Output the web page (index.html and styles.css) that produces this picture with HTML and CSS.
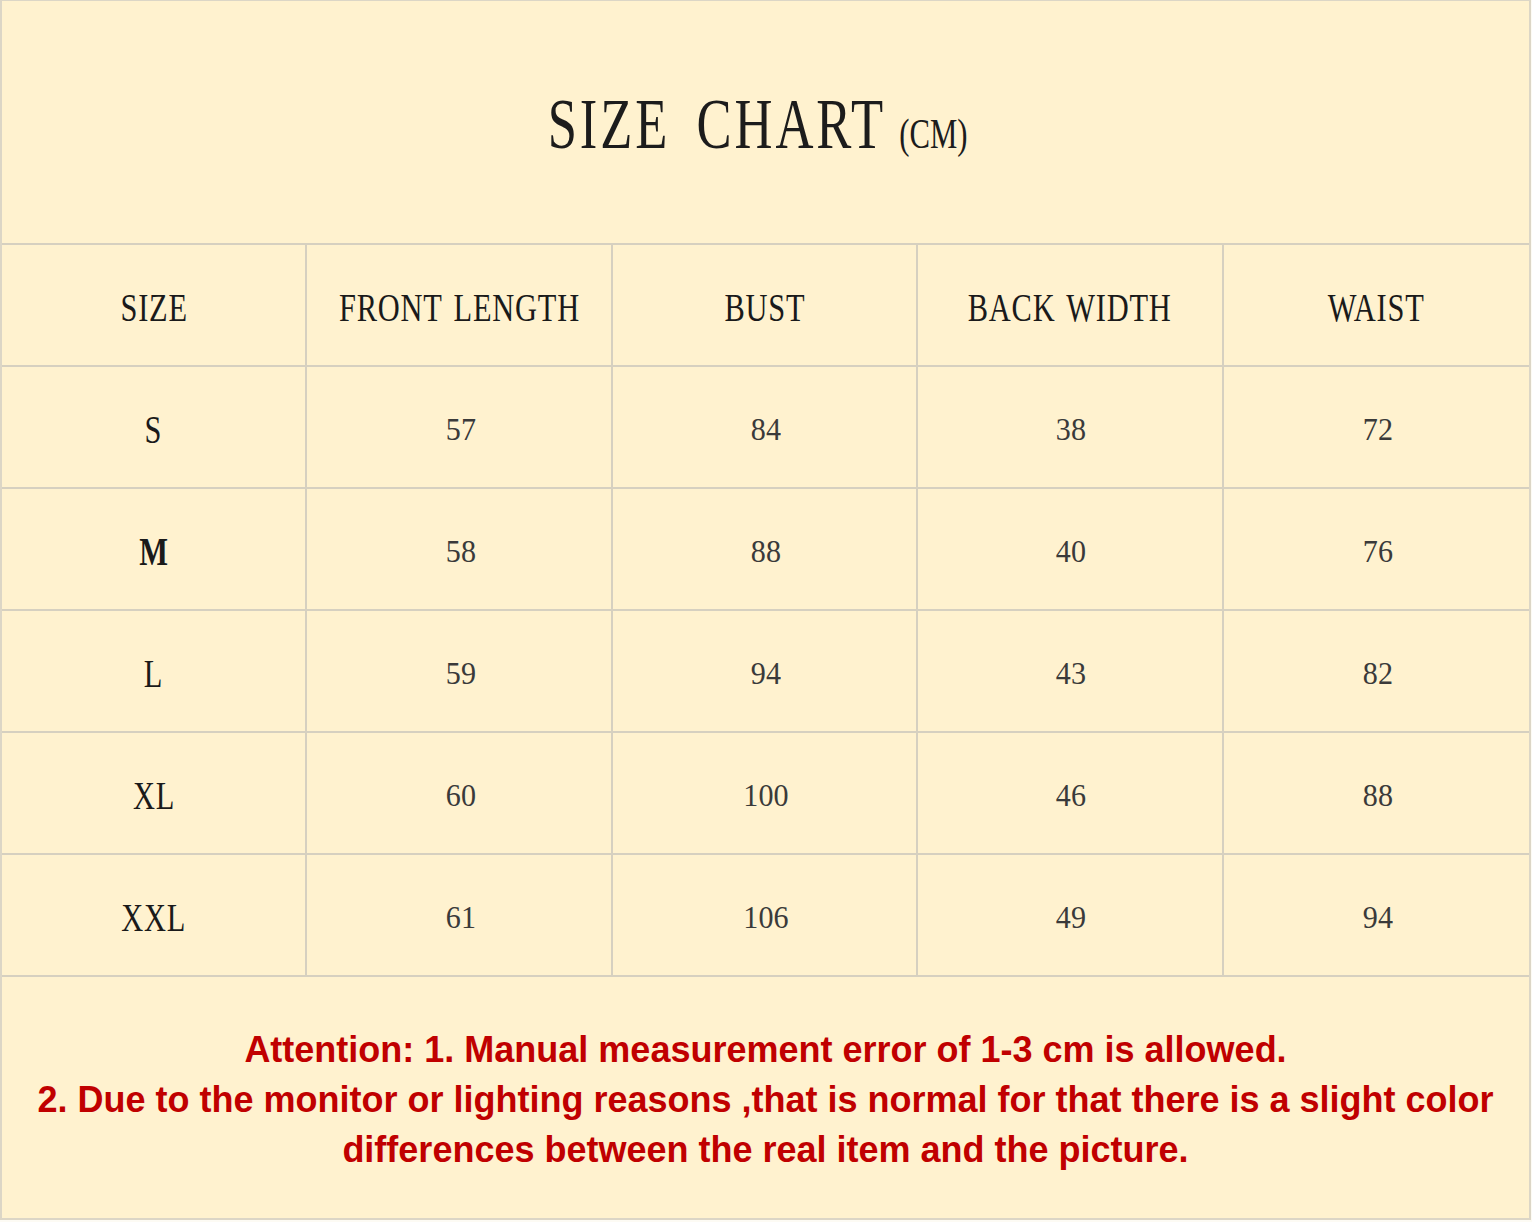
FILE: index.html
```html
<!DOCTYPE html>
<html lang="en">
<head>
<meta charset="utf-8">
<title>Size Chart</title>
<link rel="stylesheet" href="styles.css">
</head>
<body>
<div class="page">
  <header class="title">
    <h1 class="title-text"><span class="title-main">SIZE CHART</span><span class="title-unit">(CM)</span></h1>
  </header>
  <div class="chart">
    <div class="cell head"><span>SIZE</span></div>
    <div class="cell head"><span>FRONT LENGTH</span></div>
    <div class="cell head"><span>BUST</span></div>
    <div class="cell head"><span>BACK WIDTH</span></div>
    <div class="cell head"><span>WAIST</span></div>

    <div class="cell label"><span>S</span></div>
    <div class="cell num"><span>57</span></div>
    <div class="cell num"><span>84</span></div>
    <div class="cell num"><span>38</span></div>
    <div class="cell num"><span>72</span></div>

    <div class="cell label bold"><span>M</span></div>
    <div class="cell num"><span>58</span></div>
    <div class="cell num"><span>88</span></div>
    <div class="cell num"><span>40</span></div>
    <div class="cell num"><span>76</span></div>

    <div class="cell label"><span>L</span></div>
    <div class="cell num"><span>59</span></div>
    <div class="cell num"><span>94</span></div>
    <div class="cell num"><span>43</span></div>
    <div class="cell num"><span>82</span></div>

    <div class="cell label"><span>XL</span></div>
    <div class="cell num"><span>60</span></div>
    <div class="cell num"><span>100</span></div>
    <div class="cell num"><span>46</span></div>
    <div class="cell num"><span>88</span></div>

    <div class="cell label"><span>XXL</span></div>
    <div class="cell num"><span>61</span></div>
    <div class="cell num"><span>106</span></div>
    <div class="cell num"><span>49</span></div>
    <div class="cell num"><span>94</span></div>
  </div>
  <footer class="note">
    <p>Attention: 1. Manual measurement error of 1-3 cm is allowed.</p>
    <p>2. Due to the monitor or lighting reasons ,that is normal for that there is a slight color differences between the real item and the picture.</p>
  </footer>
</div>
</body>
</html>
```

FILE: styles.css
```css
* { box-sizing: border-box; }

html, body {
  margin: 0;
  padding: 0;
  background: #fdfbf4;
}

.page {
  width: 1531px;
  height: 1220px;
  background: #fff2cf;
  border: 1px solid #dcd6c6;
  border-width: 1px 2px 2px 2px;
  display: flex;
  flex-direction: column;
  font-family: "Liberation Serif", "Times New Roman", serif;
  color: #1c1c1c;
}

.title {
  height: 242px;
  display: flex;
  align-items: center;
  justify-content: center;
  padding-top: 4px;
}

.title-text {
  margin: 0 0 0 -16px;
  font-weight: normal;
  display: inline-block;
  transform: scaleX(0.73);
  white-space: nowrap;
}

.title-main {
  font-size: 72px;
  letter-spacing: 4px;
  word-spacing: 14px;
}

.title-unit {
  font-size: 42px;
  margin-left: 18px;
}

.chart {
  display: grid;
  grid-template-columns: repeat(5, minmax(0, 1fr));
  grid-auto-rows: 122px;
  border-bottom: 2px solid #d6d0c0;
}

.cell {
  display: flex;
  align-items: center;
  justify-content: center;
  border-top: 2px solid #d6d0c0;
  border-right: 2px solid #d6d0c0;
  padding-top: 5px;
  min-width: 0;
}

.cell:nth-child(5n) {
  border-right: none;
}

.cell span {
  display: inline-block;
  white-space: nowrap;
}

.head span,
.label span {
  font-size: 39px;
  transform: scaleX(0.78);
  color: #1a1a1a;
  letter-spacing: 1px;
  word-spacing: 4px;
}

.bold span {
  font-weight: bold;
}

.num span {
  font-size: 32px;
  color: #3a3a3a;
  transform: scaleX(0.94);
  padding-left: 3px;
}

.note {
  flex: 1;
  display: flex;
  flex-direction: column;
  align-items: center;
  justify-content: center;
  text-align: center;
  padding: 4px 16px 0;
  font-family: "Liberation Sans", Arial, sans-serif;
  font-weight: bold;
  font-size: 36px;
  line-height: 50px;
  color: #c00000;
}

.note p {
  margin: 0;
}
```
